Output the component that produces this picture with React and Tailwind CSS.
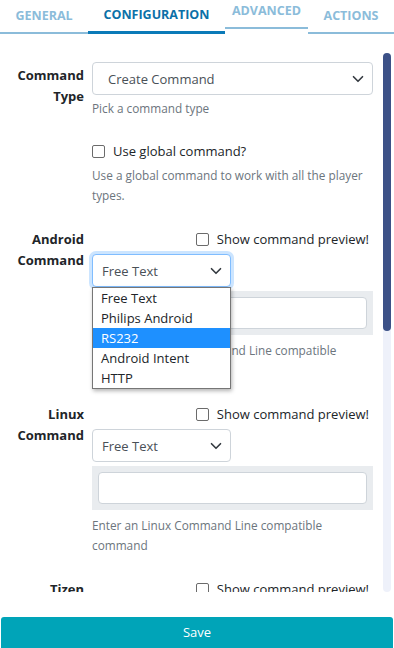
import React from "react";

const Chevron = () => (
  <svg width="12" height="12" viewBox="0 0 16 16" className="shrink-0">
    <path d="M2 5l6 6 6-6" fill="none" stroke="#343a40" strokeWidth="2.2" strokeLinecap="round" strokeLinejoin="round" />
  </svg>
);

const Select = ({ value, className = "", focus = false }) => (
  <div
    className={`flex items-center justify-between h-[33px] bg-white border rounded-[4px] text-[13px] text-[#495057] ${
      focus ? "border-[#80bdff] shadow-[0_0_0_3px_rgba(0,123,255,0.2)]" : "border-[#ced4da]"
    } ${className}`}
  >
    <span className="pt-[2px]">{value}</span>
    <Chevron />
  </div>
);

const Checkbox = ({ label }) => (
  <label className="flex items-center h-[21px] gap-[8px] text-[13px] text-[#212529]">
    <span className="w-[13px] h-[13px] border border-[#6b6b6b] rounded-[2px] bg-white" />
    {label}
  </label>
);

const Help = ({ children }) => (
  <p className="text-[11.8px] leading-[20px] text-[#6c757d]">{children}</p>
);

const Label = ({ children, className = "" }) => (
  <div className={`w-[84px] shrink-0 text-right font-bold text-[13px] leading-[21px] text-[#212529] ${className}`}>
    {children}
  </div>
);

const CommandRow = ({ first, second, helpName, dropdown }) => (
  <div className="flex gap-[8px]">
    <Label>
      {first}
      <br />
      {second}
    </Label>
    <div className="flex-1 relative">
      <div className="flex justify-end pr-[4px]">
        <Checkbox label="Show command preview!" />
      </div>
      <Select value="Free Text" focus={dropdown} className="w-[139px] mt-[4px] pl-[9px] pr-[8px]" />
      <div className="mt-[4px] bg-[#e9ecef] p-[6px] h-[44px]">
        <div className="h-[32px] bg-white border border-[#ced4da] rounded-[4px]" />
      </div>
      <div className="mt-[5px]">
        <Help>
          Enter an {helpName} Command Line compatible
          <br />
          command
        </Help>
      </div>
      {dropdown && (
        <div className="absolute left-0 top-[58px] w-[139px] bg-white border border-[#767676] shadow-[1px_2px_4px_rgba(0,0,0,0.3)] text-[13px] text-[#212529] leading-[20px]">
          {["Free Text", "Philips Android", "RS232", "Android Intent", "HTTP"].map((o) => (
            <div key={o} className={`px-[8px] ${o === "RS232" ? "bg-[#1e90ff] text-white" : ""}`}>
              {o}
            </div>
          ))}
        </div>
      )}
    </div>
  </div>
);

const Tab = ({ children, active, raised }) => (
  <div
    className={`flex items-center justify-center font-bold text-[12.5px] ${
      active
        ? "h-[34px] text-[#0b70a8] border-b-[3px] border-[#0b7ab8]"
        : raised
        ? "h-[29px] text-[#8bbcda] border-b-[2px] border-[#8bbcda] pb-[4px] self-start"
        : "h-[34px] text-[#8bbcda] border-b-[2px] border-[#8bbcda]"
    }`}
  >
    {children}
  </div>
);

export default function App() {
  return (
    <div className="w-[394px] h-[648px] bg-white flex flex-col overflow-hidden" style={{ fontFamily: '"Open Sans", "Noto Sans", sans-serif' }}>
      <div className="grid grid-cols-[88px_137px_83px_86px] items-end h-[34px]">
        <Tab>GENERAL</Tab>
        <Tab active>CONFIGURATION</Tab>
        <Tab raised>ADVANCED</Tab>
        <Tab>ACTIONS</Tab>
      </div>

      <div className="flex h-[558px]">
        <div className="flex-1 overflow-hidden pr-[10px]">
          <div className="flex gap-[8px] mt-[28px]">
            <Label className="pt-[3px]">
              Command
              <br />
              Type
            </Label>
            <div className="flex-1">
              <Select value="Create Command" className="pl-[15px] pr-[8px]" />
              <div className="mt-[3px]">
                <Help>Pick a command type</Help>
              </div>
            </div>
          </div>

          <div className="pl-[92px] mt-[23px]">
            <Checkbox label="Use global command?" />
            <div className="mt-[3px]">
              <Help>
                Use a global command to work with all the player
                <br />
                types.
              </Help>
            </div>
          </div>

          <div className="mt-[24px]">
            <CommandRow first="Android" second="Command" helpName="Android" dropdown />
          </div>
          <div className="mt-[24px]">
            <CommandRow first="Linux" second="Command" helpName="Linux" />
          </div>
          <div className="mt-[24px]">
            <CommandRow first="Tizen" second="Command" helpName="Tizen" />
          </div>
        </div>
        <div className="w-[8px] mr-[3px] mt-[19px] rounded-full bg-[#eef1fa] flex flex-col">
          <div className="h-[278px] rounded-full bg-[#3c5187]" />
        </div>
      </div>

      <div className="mt-auto mx-[1px] h-[31px] bg-[#00a4b8] rounded-t-[3px] flex items-center justify-center text-white text-[13px]">
        Save
      </div>
    </div>
  );
}
